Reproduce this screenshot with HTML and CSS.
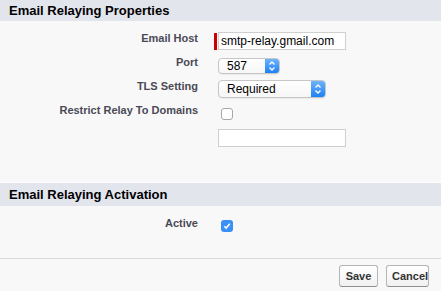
FILE: index.html
```html
<!DOCTYPE html>
<html lang="en">
<head>
  <meta charset="UTF-8" />
  <title>Email Relaying</title>
  <link rel="stylesheet" href="styles.css">
</head>
<body>

  <!-- Properties -->
  <div class="section-head first">Email Relaying Properties</div>
  <div class="section-body props">
    <div class="row">
      <label class="label">Email Host</label>
      <div class="field">
        <span class="required-bar"></span>
        <div class="textbox">smtp-relay.gmail.com</div>
      </div>
    </div>

    <div class="row row-port">
      <label class="label label-select">Port</label>
      <div class="field">
        <div class="select select-port">
          <span class="select-value">587</span>
          <span class="select-arrows">
            <svg width="14" height="14" viewBox="0 0 14 14"><path d="M4.5 5.5 L7 3 L9.5 5.5 M4.5 8.5 L7 11 L9.5 8.5" fill="none" stroke="#fff" stroke-width="1.3"/></svg>
          </span>
        </div>
      </div>
    </div>

    <div class="row row-tls">
      <label class="label">TLS Setting</label>
      <div class="field">
        <div class="select select-tls">
          <span class="select-value">Required</span>
          <span class="select-arrows">
            <svg width="14" height="16" viewBox="0 0 14 16"><path d="M4.5 6.5 L7 4 L9.5 6.5 M4.5 9.5 L7 12 L9.5 9.5" fill="none" stroke="#fff" stroke-width="1.3"/></svg>
          </span>
        </div>
      </div>
    </div>

    <div class="row row-check">
      <label class="label">Restrict Relay To Domains</label>
      <div class="field">
        <span class="checkbox"></span>
      </div>
    </div>

    <div class="row row-domains">
      <span class="label"></span>
      <div class="field">
        <div class="textbox empty"></div>
      </div>
    </div>
  </div>

  <!-- Activation -->
  <div class="section-head second">Email Relaying Activation</div>
  <div class="section-body activation">
    <div class="row row-active">
      <label class="label">Active</label>
      <div class="field">
        <span class="checkbox checked">
          <svg width="12" height="12" viewBox="0 0 12 12"><path d="M3.3 6.2 L5.2 8.1 L8.8 3.8" fill="none" stroke="#fff" stroke-width="1.6"/></svg>
        </span>
      </div>
    </div>
  </div>

  <div class="footer">
    <button class="btn btn-save">Save</button>
    <button class="btn btn-cancel">Cancel</button>
  </div>

</body>
</html>
```

FILE: styles.css
```css
body {
  margin: 0;
  background: #f8f8f8;
  font-family: "Liberation Sans", Arial, sans-serif;
  color: #000;
}
.section-head {
  background: #e3e5ed;
  font-size: 13px;
  font-weight: bold;
  padding-left: 9px;
}
.section-head.first {
  height: 21px;
  line-height: 21px;
}
.section-head.second {
  height: 23px;
  line-height: 23px;
  border-top: 1px solid #fff;
}
.props {
  padding-top: 11px;
  padding-bottom: 35px;
}
.activation {
  padding-top: 11px;
  padding-bottom: 26px;
}
.row {
  display: flex;
  align-items: flex-start;
}
.label {
  width: 198px;
  margin-right: 20px;
  text-align: right;
  font-size: 11px;
  line-height: 13px;
  font-weight: bold;
  color: #4a4a56;
}
.label-select {
  margin-top: -2px;
}
.field {
  display: flex;
  align-items: center;
}
.row-port {
  margin-top: 8px;
}
.row-tls {
  margin-top: 6px;
}
.row-check {
  margin-top: 6px;
}
.row-domains {
  margin-top: 9px;
}
.row-active {
  margin-top: 0;
}
.required-bar {
  width: 3px;
  height: 17px;
  background: #c00;
  margin-left: -4px;
  margin-right: 1px;
}
.textbox {
  box-sizing: border-box;
  width: 128px;
  height: 18px;
  border: 1px solid #cfcfcf;
  background: #fff;
  font-size: 12px;
  line-height: 16px;
  padding-left: 2px;
}
.select {
  box-sizing: border-box;
  display: flex;
  align-items: stretch;
  background: linear-gradient(#fff, #f6f6f6);
  border: 1px solid #c6c6c6;
  border-radius: 4px;
  box-shadow: 0 1px 1px rgba(0,0,0,0.06);
  font-size: 12px;
  overflow: hidden;
}
.select-port {
  width: 62px;
  height: 16px;
  line-height: 14px;
}
.select-tls {
  width: 108px;
  height: 18px;
  line-height: 16px;
}
.select-value {
  flex: 1;
  padding-left: 8px;
}
.select-arrows {
  width: 14px;
  display: flex;
  align-items: center;
  justify-content: center;
  background: linear-gradient(#6db4fb, #1e80f6);
}
.checkbox {
  box-sizing: border-box;
  display: inline-flex;
  width: 12px;
  height: 12px;
  margin-left: 3px;
  border: 1px solid #a8a8a8;
  border-radius: 3px;
  background: #fff;
}
.row-check .checkbox {
  margin-top: 4px;
}
.row-active .checkbox {
  margin-top: 3px;
}
.checkbox.checked {
  border: none;
  background: #3b8ff6;
  align-items: center;
  justify-content: center;
}
.footer {
  border-top: 1px solid #dadada;
  display: flex;
  justify-content: flex-end;
  gap: 8px;
  padding: 6px 12px 0 0;
}
.btn {
  box-sizing: border-box;
  height: 22px;
  padding: 0 5px;
  font-family: "Liberation Sans", Arial, sans-serif;
  font-size: 11px;
  font-weight: bold;
  color: #333;
  background: linear-gradient(#fff, #f1f1f1);
  border: 1px solid #b5b5b5;
  border-bottom-color: #8f8f8f;
  border-radius: 3px;
}
.btn-save {
  width: 39px;
}
.btn-cancel {
  width: 43px;
}
```
